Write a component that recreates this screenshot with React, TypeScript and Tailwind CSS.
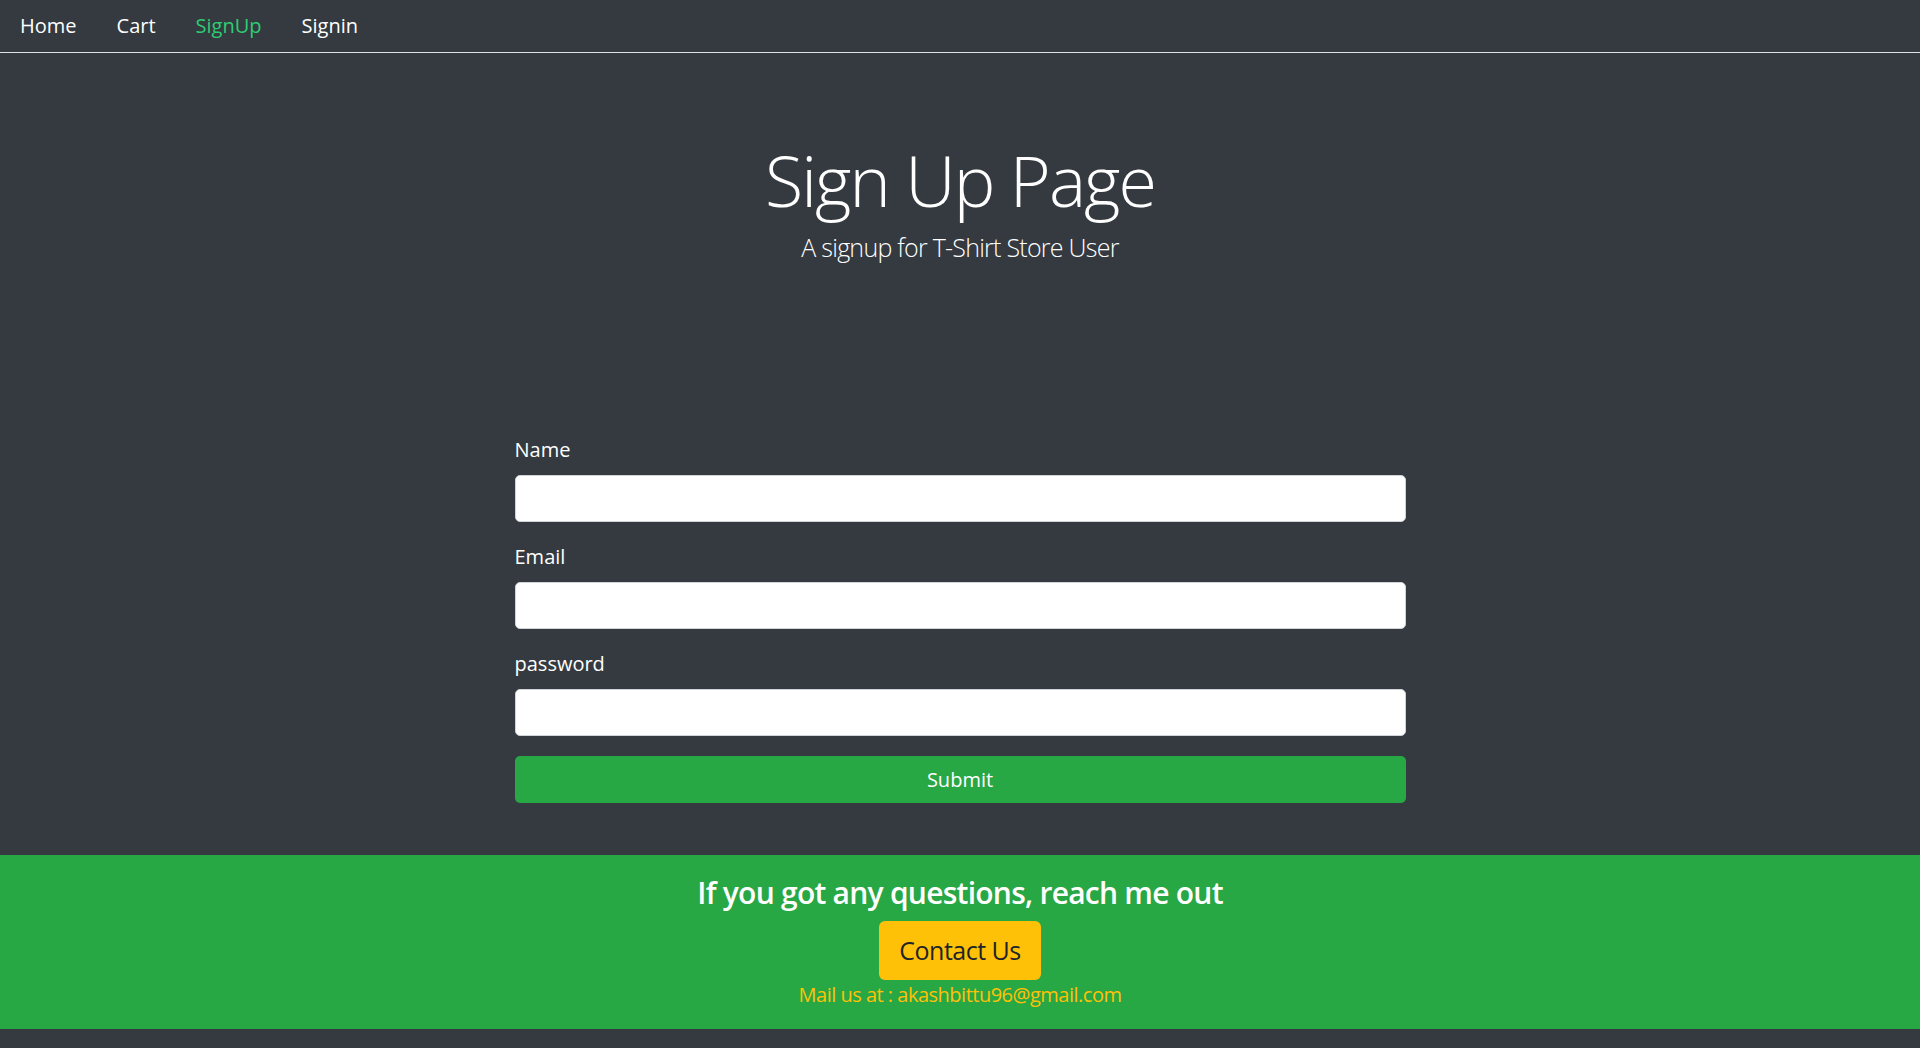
import React from 'react';

const links = [
  { label: 'Home', active: false },
  { label: 'Cart', active: false },
  { label: 'SignUp', active: true },
  { label: 'Signin', active: false },
];

const fields = ['Name', 'Email', 'password'];

export default function App() {
  return (
    <div className="min-h-screen bg-[#343a40] font-['Open_Sans','Noto_Sans',sans-serif] text-white">
      <ul className="flex h-[53px] border-b border-[#dee2e6]">
        {links.map((l) => (
          <li key={l.label}>
            <a
              href="#"
              className={
                'block px-[20px] py-[11px] text-[20px] leading-[30px] ' +
                (l.active ? 'text-[#2ecc72]' : 'text-white')
              }
            >
              {l.label}
            </a>
          </li>
        ))}
      </ul>

      <div className="pt-[85px] pb-[40px] text-center">
        <h1 className="text-[70px] font-light leading-[84px] tracking-[-0.027em]">Sign Up Page</h1>
        <p className="text-[25px] font-light leading-[37px] mt-[7px] tracking-[-0.03em]">A signup for T-Shirt Store User</p>
      </div>

      <form className="w-[891px] mx-auto pt-[129px]" onSubmit={(e) => e.preventDefault()}>
        {fields.map((f) => (
          <div key={f} className="mb-[20px]">
            <label className="block text-[20px] leading-[30px] mb-[10px]">{f}</label>
            <input
              type={f === 'password' ? 'password' : 'text'}
              className="block w-full h-[47px] rounded-[5px] border border-[#ced4da] bg-white px-[15px] text-[20px] text-[#495057] outline-none"
            />
          </div>
        ))}
        <button
          type="submit"
          className="block w-full h-[47px] rounded-[5px] bg-[#28a745] text-[20px] leading-[30px] text-white"
        >
          Submit
        </button>
      </form>

      <div className="mt-[52px] bg-[#28a745] pt-[20px] pb-[19px] text-center">
        <h4 className="text-[30px] font-semibold leading-[36px] tracking-[-0.025em]">If you got any questions, reach me out</h4>
        <button className="mt-[10px] h-[59px] rounded-[6px] bg-[#ffc107] px-[20px] text-[25px] leading-[37px] text-[#212529] tracking-[-0.02em]">
          Contact Us
        </button>
        <p className="text-[20px] leading-[30px] text-[#ffc107] tracking-[-0.025em]">Mail us at : akashbittu96@gmail.com</p>
      </div>
    </div>
  );
}
